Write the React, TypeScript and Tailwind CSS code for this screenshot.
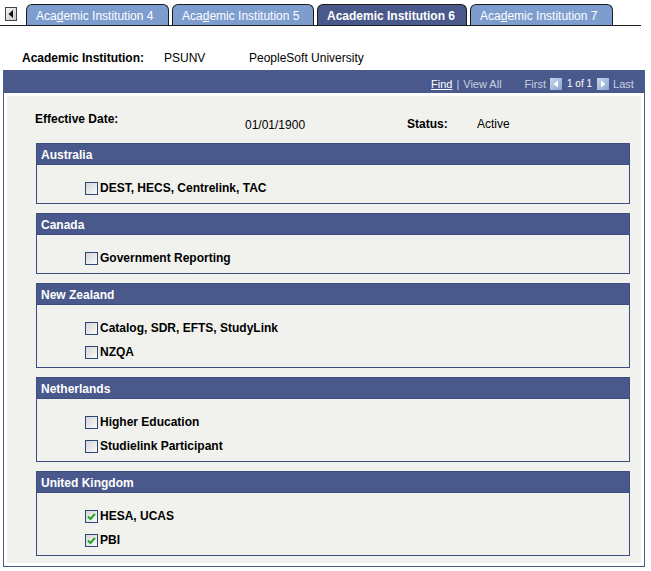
import React from "react";

const DARK = "bg-[#4a598b]";

function Tab({ label, active, width }: { label: string; active?: boolean; width: string }) {
  const a = label.slice(0, 3);
  const b = label.slice(4);
  return (
    <div
      className={`${width} h-[21px] rounded-t-[6px] border border-b-0 border-[#1c1c1c] flex items-center pt-[1px] pl-[9px] text-[12px] text-white ${
        active ? "bg-[#4a598b] font-bold" : "bg-[#7d9dcf]"
      }`}
    >
      {active ? (
        label
      ) : (
        <span>
          {a}
          <span className="underline">d</span>
          {b}
        </span>
      )}
    </div>
  );
}

function CheckBox({ checked }: { checked?: boolean }) {
  return (
    <div className="w-[13px] h-[13px] border border-[#2c4675] bg-linear-to-br from-[#d6d6d6] to-[#fafafa] flex items-center justify-center">
      {checked && (
        <svg width="11" height="11" viewBox="0 0 11 11">
          <polyline points="2,5.5 4.5,8 9,2.8" fill="none" stroke="#26a02a" strokeWidth="2" />
        </svg>
      )}
    </div>
  );
}

function Section({ title, items }: { title: string; items: { label: string; checked?: boolean }[] }) {
  return (
    <div className="border border-[#3d4d80] bg-[#f1f2ee]">
      <div className={`${DARK} h-[21px] border-b border-[#3d4d80] pl-[4px] pt-[1px] flex items-center text-[12px] font-bold text-white`}>
        {title}
      </div>
      <div className="pt-[11px] pb-[3px]">
        {items.map((it) => (
          <div key={it.label} className="h-[24px] flex items-center pl-[48px] gap-[2px]">
            <CheckBox checked={it.checked} />
            <span className="text-[12px] font-bold text-black">{it.label}</span>
          </div>
        ))}
      </div>
    </div>
  );
}

function NavIcon({ dir }: { dir: "l" | "r" }) {
  return (
    <svg width="12" height="12" viewBox="0 0 12 12" className="block">
      <defs>
        <linearGradient id={`g${dir}`} x1="0" y1="0" x2="1" y2="1">
          <stop offset="0" stopColor="#c8d6ee" />
          <stop offset="1" stopColor="#8aa6d4" />
        </linearGradient>
      </defs>
      <rect x="0" y="0" width="12" height="12" fill={`url(#g${dir})`} />
      {dir === "l" ? (
        <polygon points="8,2.5 3.5,6 8,9.5" fill="#ffffff" />
      ) : (
        <polygon points="4,2.5 8.5,6 4,9.5" fill="#ffffff" />
      )}
    </svg>
  );
}

export default function App() {
  return (
    <div className="w-[651px] h-[571px] bg-white font-['Liberation_Sans',Arial,sans-serif] text-black text-[12px] leading-[14px] overflow-hidden">
      {/* Tabs */}
      <div className="mt-[4px] w-[641px] h-[22px] border-b border-[#1c1c1c] flex items-end">
        <div className="ml-[5px] mb-[4px] w-[12px] h-[14px] border border-[#444] bg-linear-to-br from-[#f4f4f4] to-[#c8c8c8] flex items-center justify-center">
          <svg width="8" height="10" viewBox="0 0 8 10">
            <polygon points="6,1 1.5,5 6,9" fill="#111" />
          </svg>
        </div>
        <div className="ml-[9px] flex items-end gap-[3px]">
          <Tab label="Academic Institution 4" width="w-[143px]" />
          <Tab label="Academic Institution 5" width="w-[142px]" />
          <Tab label="Academic Institution 6" width="w-[150px]" active />
          <Tab label="Academic Institution 7" width="w-[143px]" />
        </div>
      </div>

      {/* Academic Institution row */}
      <div className="mt-[25px] flex pl-[22px] h-[14px]">
        <div className="w-[142px] font-bold">Academic Institution:</div>
        <div className="w-[85px]">PSUNV</div>
        <div>PeopleSoft University</div>
      </div>

      {/* Panel */}
      <div className="mt-[5px] ml-[3px] w-[642px] border border-[#4a598b]">
        <div className={`${DARK} h-[22px] flex items-center pt-[3px] text-[11px] text-[#c9d0e2]`}>
          <div className="ml-[427px] flex items-center">
            <span className="text-white underline">Find</span>
            <span className="mx-[4px]">|</span>
            <span>View All</span>
          </div>
          <div className="ml-[23px] flex items-center">
            <span>First</span>
            <span className="ml-[4px]">
              <NavIcon dir="l" />
            </span>
            <span className="ml-[5px] text-[10px] text-white">1 of 1</span>
            <span className="ml-[5px]">
              <NavIcon dir="r" />
            </span>
            <span className="ml-[4px]">Last</span>
          </div>
        </div>
        <div className="p-[3px] bg-white">
          <div className="bg-[#f1f2ee] pt-[16px] pb-[7px] pl-[29px] pr-[11px]">
            <div className="flex h-[31px] -ml-[1px]">
              <div className="w-[210px] font-bold">Effective Date:</div>
              <div className="w-[162px] mt-[6px]">01/01/1900</div>
              <div className="w-[70px] mt-[5px] font-bold">Status:</div>
              <div className="mt-[5px]">Active</div>
            </div>
            <div className="flex flex-col gap-[9px]">
              <Section title="Australia" items={[{ label: "DEST, HECS, Centrelink, TAC" }]} />
              <Section title="Canada" items={[{ label: "Government Reporting" }]} />
              <Section
                title="New Zealand"
                items={[{ label: "Catalog, SDR, EFTS, StudyLink" }, { label: "NZQA" }]}
              />
              <Section
                title="Netherlands"
                items={[{ label: "Higher Education" }, { label: "Studielink Participant" }]}
              />
              <Section
                title="United Kingdom"
                items={[
                  { label: "HESA, UCAS", checked: true },
                  { label: "PBI", checked: true },
                ]}
              />
            </div>
          </div>
        </div>
      </div>
    </div>
  );
}
